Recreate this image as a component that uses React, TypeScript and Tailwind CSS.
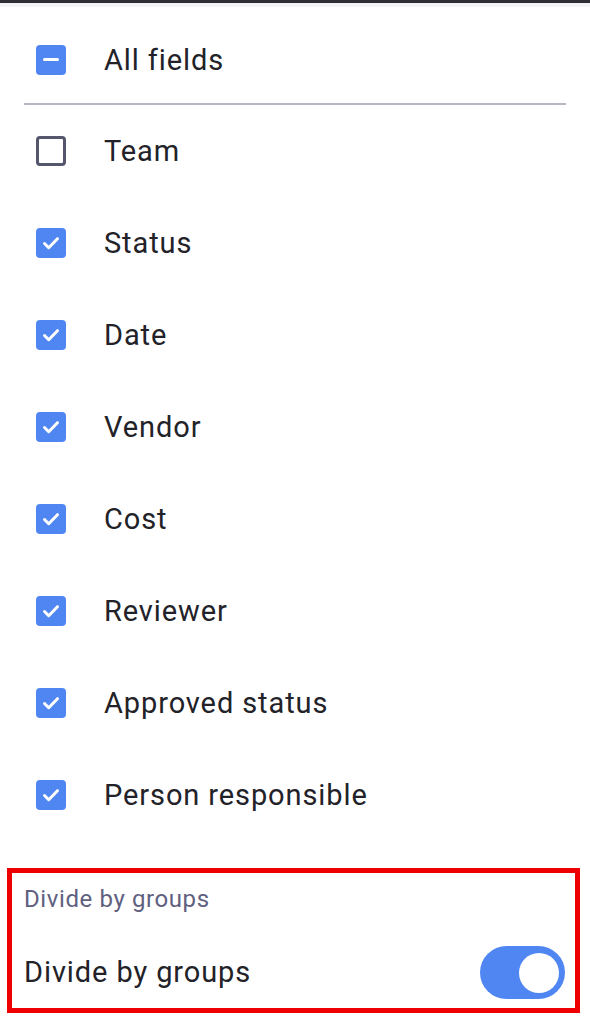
import React, { useState } from 'react';

const fields = [
  { label: 'Team', checked: false },
  { label: 'Status', checked: true },
  { label: 'Date', checked: true },
  { label: 'Vendor', checked: true },
  { label: 'Cost', checked: true },
  { label: 'Reviewer', checked: true },
  { label: 'Approved status', checked: true },
  { label: 'Person responsible', checked: true },
];

const Box: React.FC<{ state: 'on' | 'off' | 'some' }> = ({ state }) => {
  if (state === 'off') {
    return <div className="w-[30px] h-[30px] rounded-[4px] border-[3px] border-[#55566e] bg-white" />;
  }
  return (
    <div className="w-[30px] h-[30px] rounded-[4px] bg-[#4f86f2] flex items-center justify-center">
      {state === 'on' ? (
        <svg width="22" height="22" viewBox="0 0 22 22" fill="none">
          <path d="M4.5 11.5l4.2 4.2 8.8-9" stroke="white" strokeWidth="3" strokeLinecap="round" strokeLinejoin="round" />
        </svg>
      ) : (
        <div className="w-[16px] h-[3px] rounded-full bg-white" />
      )}
    </div>
  );
};

export default function App() {
  const [grouped, setGrouped] = useState(true);

  return (
    <div className="w-[590px] h-[1024px] bg-white overflow-hidden text-[#222228] font-['Roboto','Liberation_Sans',sans-serif]">
      <div className="h-[3px] bg-[#2d2d33]" />
      <div className="h-[4px] bg-[#f3f3f6]" />

      <div className="h-[96px] pt-[9px] flex items-center pl-[36px] gap-[38px]">
        <Box state="some" />
        <span className="text-[29px] tracking-[0.9px] translate-y-[1px]">All fields</span>
      </div>
      <div className="mx-[24px] h-[2px] bg-[#b7b7c2]" />

      {fields.map((f) => (
        <div key={f.label} className="h-[92px] flex items-center pl-[36px] gap-[38px]">
          <Box state={f.checked ? 'on' : 'off'} />
          <span className="text-[29px] tracking-[0.9px] translate-y-[1px]">{f.label}</span>
        </div>
      ))}

      <div className="mt-[27px] ml-[7px] w-[573px] h-[145px] border-[5px] border-[#ee0000] flex flex-col pl-[12px] pr-[10px]">
        <div className="pt-[8px] text-[24px] text-[#5f6080] tracking-[0.6px]">Divide by groups</div>
        <div className="mt-[29px] flex items-center justify-between">
          <span className="text-[29px] tracking-[0.9px]">Divide by groups</span>
          <button
            onClick={() => setGrouped(!grouped)}
            className={`w-[85px] h-[53px] rounded-full flex items-center px-[6px] ${
              grouped ? 'bg-[#4f86f2] justify-end' : 'bg-[#c9cad6] justify-start'
            }`}
          >
            <div className="w-[40px] h-[40px] rounded-full bg-white" />
          </button>
        </div>
      </div>
    </div>
  );
}
